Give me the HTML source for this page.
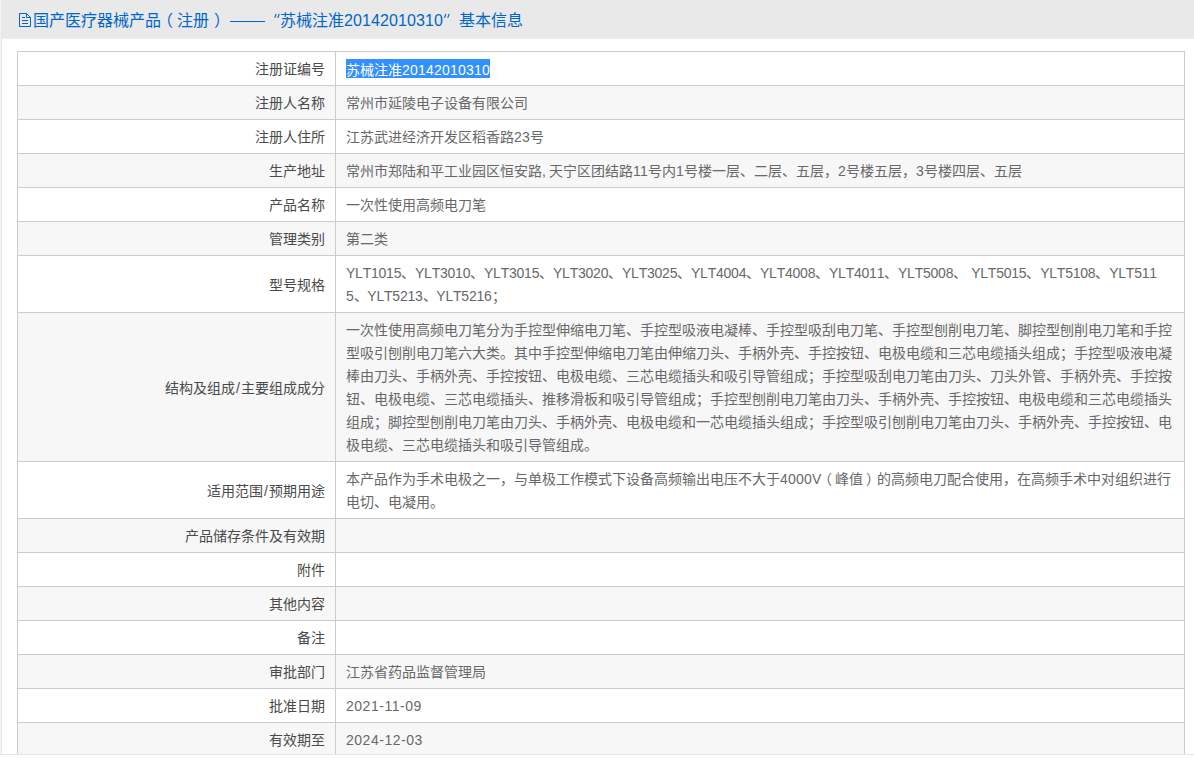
<!DOCTYPE html>
<html lang="zh-CN">
<head>
<meta charset="utf-8">
<title>基本信息</title>
<style>
html,body{margin:0;padding:0;}
body{width:1194px;height:758px;overflow:hidden;background:#fff;position:relative;
 font-family:"Liberation Sans",sans-serif;font-size:14px;color:#555;}
#hdr{position:absolute;left:0;top:0;width:1194px;height:38px;background:#e9e9e9;border-bottom:1px solid #ebeef7;}
#ttl{position:absolute;left:0;top:0;height:39px;line-height:39px;font-size:16px;color:#0066cc;white-space:nowrap;}
#ttl svg{position:absolute;left:19px;top:13px;}
#ttl span{position:absolute;top:1px;}
#dash{position:absolute;left:230px;top:21px;width:35px;height:1px;background:#0066cc;}
#ls{position:absolute;left:0;top:0;width:1px;height:755px;background:#f2f2f2;border-right:1px solid #e9e9e9;}
#bl{position:absolute;left:0;top:754px;width:1194px;height:1px;background:#e6e6e6;}
#bw{position:absolute;left:0;top:755px;width:1194px;height:3px;background:#fff;}
table{position:absolute;left:17px;top:51px;width:1168px;border-collapse:collapse;table-layout:fixed;}
td{border:1px solid #ccc;padding:6px 10px 4px;line-height:23px;font-size:14px;vertical-align:middle;white-space:nowrap;overflow:hidden;}
td.l{width:297px;text-align:right;color:#4a4a4a;}
td.v{color:#686868;text-align:left;}
tr.o td{background:#fff;}
tr.e td{background:#f7f7f7;}
.sel{background:#3390ff;color:#fff;display:inline-block;line-height:23px;height:19px;vertical-align:middle;position:relative;top:-2px;}
.d{letter-spacing:0.214px;}
.s{display:inline-block;width:6px;text-align:center;}
.pl{position:relative;left:-3px;}
.pr{position:relative;left:3px;}
.c{letter-spacing:-0.4px;}
.y{letter-spacing:-0.2275px;font-kerning:none;word-spacing:0.5px;}
.dt{letter-spacing:0.52px;}
</style>
</head>
<body>
<div id="hdr"></div>
<div id="ttl">
<svg width="12" height="14" viewBox="0 0 12 14"><path d="M0.5 0.5H7.5L11.5 4.5V13.5H0.5Z M7.5 0.5V4.5H11.5" fill="none" stroke="#0066cc" stroke-width="1"/><path d="M3 4.5H6M3 7.5H9M3 10.5H9" stroke="#0066cc" stroke-width="1"/></svg>
<span style="left:33px">国产医疗器械产品</span>
<span style="left:157px">（</span>
<span style="left:177px">注册</span>
<span style="left:214px">）</span>
<i id="dash"></i>
<svg style="left:270px;top:10px" width="184" height="12" viewBox="0 0 184 12"><path d="M4.8 7.8L6.1 3.9M7.9 7.8L9.2 3.9M174.5 7.8L175.9 3.9M177.7 7.8L179.2 3.9" stroke="#0066cc" stroke-width="1.15" fill="none"/></svg>
<span style="left:280px">苏械注准</span>
<span style="left:344px;letter-spacing:0.1px">20142010310</span>
<span style="left:458.5px">基本信息</span>
</div>
<div id="ls"></div>
<table>
<tr class="o"><td class="l">注册证编号</td><td class="v"><span class="sel">苏械注准<span class="d">20142010310</span></span></td></tr>
<tr class="e"><td class="l">注册人名称</td><td class="v">常州市延陵电子设备有限公司</td></tr>
<tr class="o"><td class="l">注册人住所</td><td class="v">江苏武进经济开发区稻香路<span class="d">23</span>号</td></tr>
<tr class="e"><td class="l">生产地址</td><td class="v">常州市郑陆和平工业园区恒安路<span class="c">, </span>天宁区团结路<span class="d">11</span>号内<span class="d">1</span>号楼一层、二层、五层，<span class="d">2</span>号楼五层，<span class="d">3</span>号楼四层、五层</td></tr>
<tr class="o"><td class="l">产品名称</td><td class="v">一次性使用高频电刀笔</td></tr>
<tr class="e"><td class="l">管理类别</td><td class="v">第二类</td></tr>
<tr class="o"><td class="l">型号规格</td><td class="v y">YLT1015、YLT3010、YLT3015、YLT3020、YLT3025、YLT4004、YLT4008、YLT4011、YLT5008、 YLT5015、YLT5108、YLT511<br>5、YLT5213、YLT5216；</td></tr>
<tr class="e"><td class="l">结构及组成<span class="s">/</span>主要组成成分</td><td class="v">一次性使用高频电刀笔分为手控型伸缩电刀笔、手控型吸液电凝棒、手控型吸刮电刀笔、手控型刨削电刀笔、脚控型刨削电刀笔和手控<br>型吸引刨削电刀笔六大类。其中手控型伸缩电刀笔由伸缩刀头、手柄外壳、手控按钮、电极电缆和三芯电缆插头组成；手控型吸液电凝<br>棒由刀头、手柄外壳、手控按钮、电极电缆、三芯电缆插头和吸引导管组成；手控型吸刮电刀笔由刀头、刀头外管、手柄外壳、手控按<br>钮、电极电缆、三芯电缆插头、推移滑板和吸引导管组成；手控型刨削电刀笔由刀头、手柄外壳、手控按钮、电极电缆和三芯电缆插头<br>组成；脚控型刨削电刀笔由刀头、手柄外壳、电极电缆和一芯电缆插头组成；手控型吸引刨削电刀笔由刀头、手柄外壳、手控按钮、电<br>极电缆、三芯电缆插头和吸引导管组成。</td></tr>
<tr class="o"><td class="l">适用范围<span class="s">/</span>预期用途</td><td class="v">本产品作为手术电极之一，与单极工作模式下设备高频输出电压不大于<span class="d">4000</span>V<span class="pl">（</span>峰值<span class="pr">）</span>的高频电刀配合使用，在高频手术中对组织进行<br>电切、电凝用。</td></tr>
<tr class="e"><td class="l">产品储存条件及有效期</td><td class="v">&nbsp;</td></tr>
<tr class="o"><td class="l">附件</td><td class="v">&nbsp;</td></tr>
<tr class="e"><td class="l">其他内容</td><td class="v">&nbsp;</td></tr>
<tr class="o"><td class="l">备注</td><td class="v">&nbsp;</td></tr>
<tr class="e"><td class="l">审批部门</td><td class="v">江苏省药品监督管理局</td></tr>
<tr class="o"><td class="l">批准日期</td><td class="v dt">2021-11-09</td></tr>
<tr class="e"><td class="l">有效期至</td><td class="v dt">2024-12-03</td></tr>
</table>
<div id="bl"></div>
<div id="bw"></div>
</body>
</html>
